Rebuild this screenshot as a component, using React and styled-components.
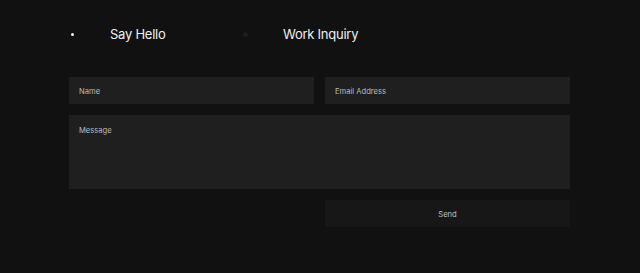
import styled, { createGlobalStyle } from 'styled-components'

const GlobalStyle = createGlobalStyle`
  html, body {
    margin: 0;
    padding: 0;
    background: #111111;
    font-family: Inter, "Liberation Sans", sans-serif;
  }
`

const Page = styled.div`
  width: 640px;
  height: 273px;
  background: #111111;
  box-sizing: border-box;
  padding: 24px 0 0 69px;
`

const Wrap = styled.div`
  width: 501px;
  display: flex;
  flex-direction: column;
`

const Tabs = styled.div`
  display: flex;
  align-items: center;
  height: 20px;
  margin-bottom: 33px;
`

const Tab = styled.div`
  display: flex;
  align-items: center;
  width: 173px;
`

const Dot = styled.span`
  display: block;
  width: ${p => (p.$active ? 3 : 5)}px;
  height: ${p => (p.$active ? 3 : 5)}px;
  border-radius: 50%;
  background: ${p => (p.$active ? '#f2f2f2' : '#1e1e1e')};
  margin-left: ${p => (p.$active ? 2 : 1)}px;
  margin-right: ${p => (p.$active ? 36 : 35)}px;
`

const TabLabel = styled.span`
  font-size: 13px;
  color: #f0f0f0;
  letter-spacing: -0.25px;
`

const Row = styled.div`
  display: grid;
  grid-template-columns: 1fr 1fr;
  gap: 11px;
  margin-bottom: 11px;
`

const Field = styled.div`
  background: #1f1f1f;
  height: ${p => p.$h || 27}px;
  margin-bottom: ${p => (p.$multi ? 11 : 0)}px;
  box-sizing: border-box;
  padding: ${p => (p.$multi ? '11px' : '2px')} 10px 0;
  display: flex;
  align-items: ${p => (p.$multi ? 'flex-start' : 'center')};
  font-size: 7.6px;
  color: #bbbbbb;
`

const Send = styled.div`
  grid-column: 2;
  height: 27px;
  padding-top: 2px;
  box-sizing: border-box;
  background: #171717;
  display: flex;
  align-items: center;
  justify-content: center;
  font-size: 7.6px;
  color: #c0c0c0;
`

export default function App () {
  return (
    <Page>
      <GlobalStyle />
      <Wrap>
        <Tabs>
          <Tab>
            <Dot $active />
            <TabLabel>Say Hello</TabLabel>
          </Tab>
          <Tab>
            <Dot />
            <TabLabel>Work Inquiry</TabLabel>
          </Tab>
        </Tabs>
        <Row>
          <Field>Name</Field>
          <Field>Email Address</Field>
        </Row>
        <Field $h={74} $multi>Message</Field>
        <Row>
          <Send>Send</Send>
        </Row>
      </Wrap>
    </Page>
  )
}
